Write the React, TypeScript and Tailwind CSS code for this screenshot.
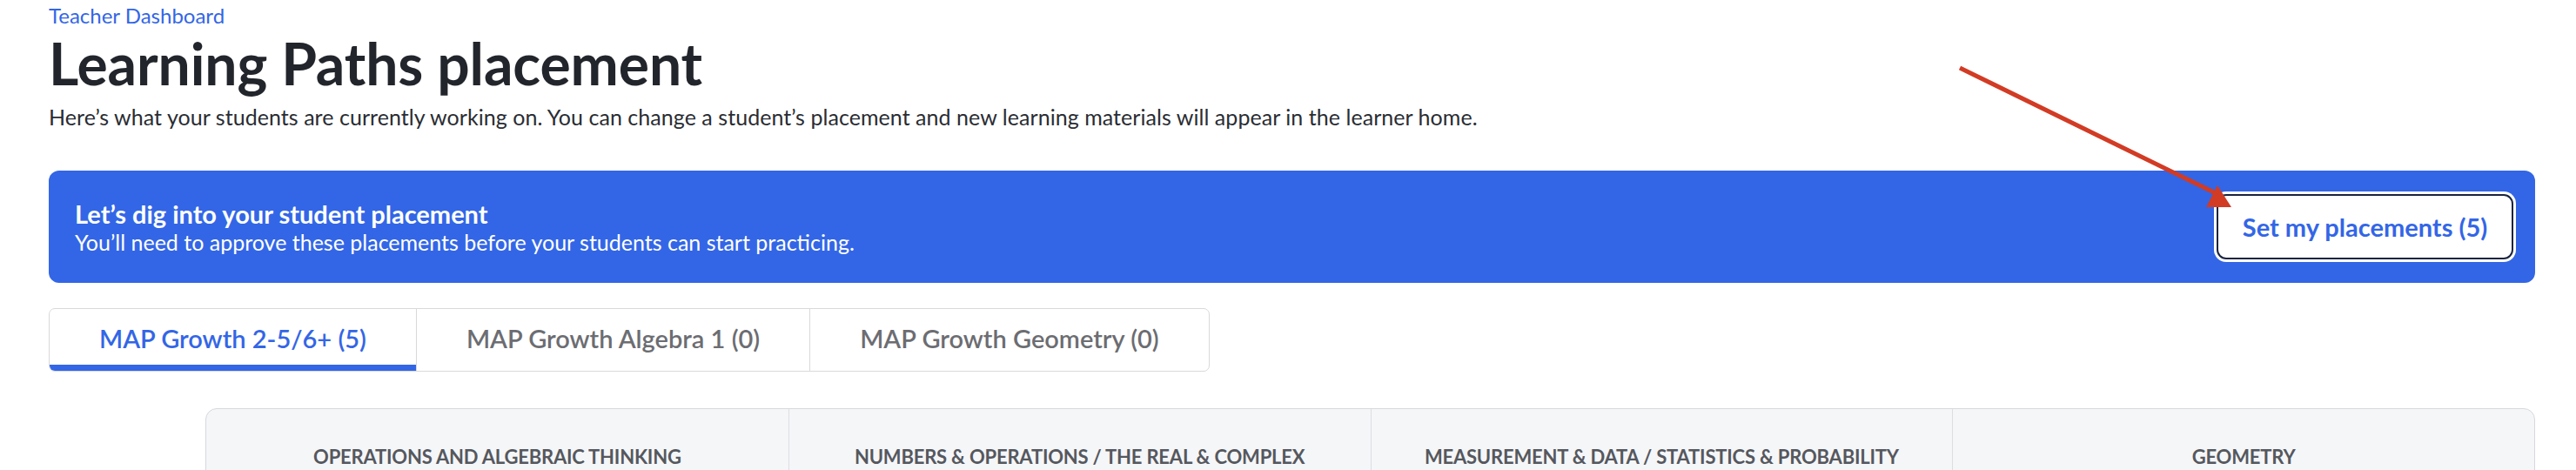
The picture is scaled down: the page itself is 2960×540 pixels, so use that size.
import React from "react";

const tabs = [
  { label: "MAP Growth 2-5/6+ (5)", active: true },
  { label: "MAP Growth Algebra 1 (0)", active: false },
  { label: "MAP Growth Geometry (0)", active: false },
];

const domains = [
  "OPERATIONS AND ALGEBRAIC THINKING",
  "NUMBERS & OPERATIONS / THE REAL & COMPLEX",
  "MEASUREMENT & DATA / STATISTICS & PROBABILITY",
  "GEOMETRY",
];

function Annotation() {
  return (
    <svg
      className="pointer-events-none absolute left-0 top-0"
      width={2960}
      height={540}
      viewBox="0 0 2960 540"
    >
      <line x1={2252} y1={78} x2={2546} y2={222} stroke="#d23b24" strokeWidth={5} />
      <polygon points="2548,213 2535,238 2564,238" fill="#d23b24" />
    </svg>
  );
}

export default function App() {
  return (
    <div className="relative h-[540px] w-[2960px] overflow-hidden bg-white pl-[56px] pr-[47px] pt-[3px] font-['Lato',sans-serif] text-[#23262c]">
      <a className="block text-[24px] leading-[29px] text-[#3366e6]">Teacher Dashboard</a>
      <h1 className="mt-[1px] text-[66px] font-bold leading-[80px] tracking-[-0.1px] text-[#22252b]">
        Learning Paths placement
      </h1>
      <p className="mt-[7px] text-[25px] leading-[29px] tracking-[0.05px] text-[#2a2d33]">
        Here’s what your students are currently working on. You can change a student’s placement and new
        learning materials will appear in the learner home.
      </p>

      <div className="mt-[47px] flex h-[129px] items-center justify-between rounded-[12px] bg-[#3366e6] pl-[30px] pr-[25px] text-white">
        <div>
          <p className="text-[29px] font-bold leading-[34px]">Let’s dig into your student placement</p>
          <p className="text-[25px] leading-[30px]">
            You’ll need to approve these placements before your students can start practicing.
          </p>
        </div>
        <button className="flex h-[75px] w-[341px] items-center justify-center rounded-[11px] border-2 border-[#1a2440] bg-white text-[29px] font-bold text-[#3366e6] shadow-[0_0_0_3px_#ffffff]">
          Set my placements (5)
        </button>
      </div>

      <div className="mt-[29px] flex w-fit overflow-hidden rounded-[7px] border border-[#d9d9dc]">
        {tabs.map((t, i) => (
          <div
            key={t.label}
            className={
              "relative flex h-[71px] items-center justify-center px-[57px] pb-[4px] text-[29px] font-semibold " +
              (i > 0 ? "border-l border-[#d9d9dc] " : "") +
              (t.active ? "text-[#3366e6]" : "text-[#6c6d72]")
            }
          >
            {t.label}
            {t.active && <span className="absolute bottom-0 left-0 right-0 h-[7px] bg-[#3366e6]" />}
          </div>
        ))}
      </div>

      <div className="ml-[180px] mt-[42px] grid grid-cols-4 overflow-hidden rounded-t-[13px] border border-[#d6d8dd] bg-[#f5f6f8]">
        {domains.map((d, i) => (
          <div
            key={d}
            className={
              "h-[120px] px-[30px] pt-[44px] text-center text-[22px] font-bold uppercase leading-[22px] tracking-[-0.2px] text-[#55585e] " +
              (i > 0 ? "border-l border-[#dcdee2]" : "")
            }
          >
            {d}
          </div>
        ))}
      </div>

      <Annotation />
    </div>
  );
}
